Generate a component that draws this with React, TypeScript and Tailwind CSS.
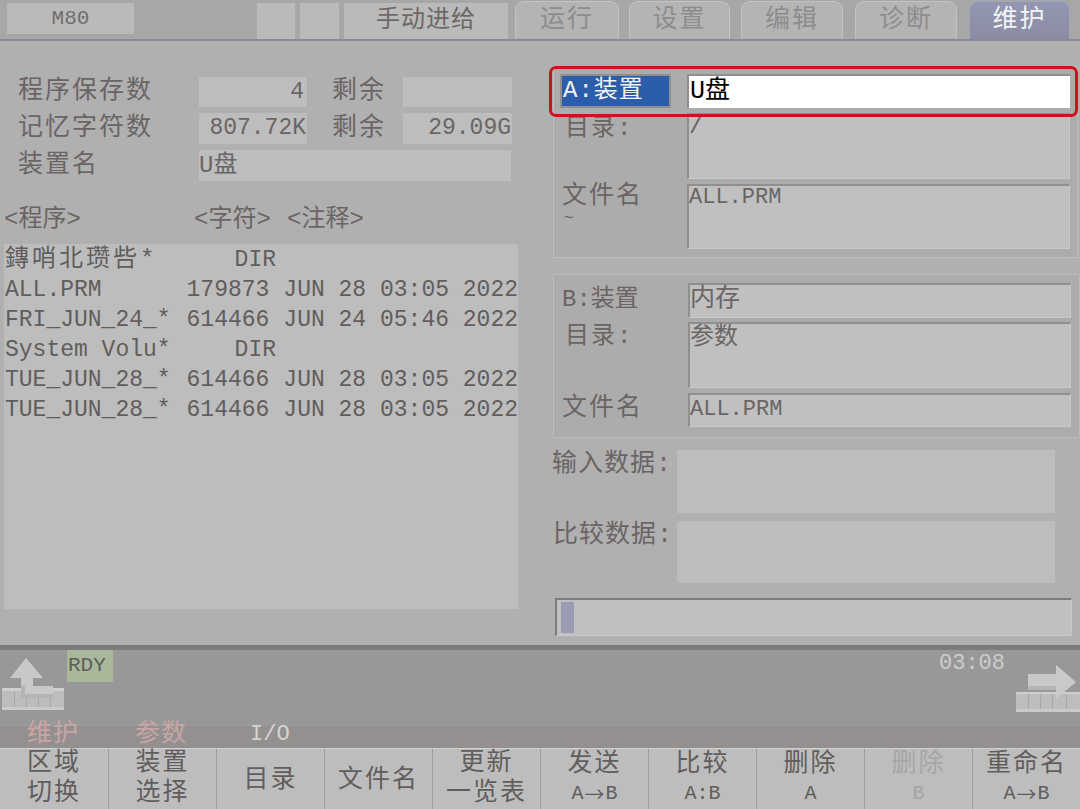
import React from "react";

const fieldCls = "bg-[#bcbdbc] text-[#6a6565]";
const inset = "border-t-2 border-l-2 border-[#8f8f8f] border-b border-r border-b-[#c9c9c9] border-r-[#c9c9c9] bg-[#bfc0bf] text-[#6a6565]";

const files = [
  { name: "鏄哨北瓒呰*", size: "DIR", date: "" },
  { name: "ALL.PRM", size: "179873", date: "JUN 28 03:05 2022" },
  { name: "FRI_JUN_24_*", size: "614466", date: "JUN 24 05:46 2022" },
  { name: "System Volu*", size: "DIR", date: "" },
  { name: "TUE_JUN_28_*", size: "614466", date: "JUN 28 03:05 2022" },
  { name: "TUE_JUN_28_*", size: "614466", date: "JUN 28 03:05 2022" },
];

const tabs = [
  { label: "运行", w: "w-[104px]", ml: "ml-[7px]" },
  { label: "设置", w: "w-[101px]", ml: "ml-[10px]" },
  { label: "编辑", w: "w-[102px]", ml: "ml-[11px]" },
  { label: "诊断", w: "w-[102px]", ml: "ml-[12px]" },
];

const keys = [
  { a: "区域", b: "切换" },
  { a: "装置", b: "选择" },
  { a: "目录" },
  { a: "文件名" },
  { a: "更新", b: "一览表" },
  { a: "发送", b: ["A", "→", "B"], mono: true },
  { a: "比较", b: "A:B", mono: true },
  { a: "删除", b: "A", mono: true },
  { a: "删除", b: "B", mono: true, off: true },
  { a: "重命名", b: ["A", "→", "B"], mono: true },
];

const UpIcon = () => (
  <svg width="64" height="58" viewBox="0 0 64 58">
    <rect x="1" y="32" width="62" height="22" fill="#bdbdbd" />
    <rect x="1" y="32" width="62" height="3" fill="#cfcfcf" />
    <rect x="1" y="51" width="62" height="3" fill="#cacaca" />
    {[13, 25, 37, 49].map((x) => (
      <rect key={x} x={x} y="35" width="1" height="16" fill="#a9a9a9" />
    ))}
    <path d="M25 2 L42 22 L32 22 L32 30 L52 30 L52 42 L20 42 L20 22 L9 22 Z" fill="#c8c8c8" />
    <path d="M20 30 L20 42 L52 42 L52 38 L24 38 L24 30 Z" fill="#b4b4b4" />
  </svg>
);

const RightIcon = () => (
  <svg width="64" height="50" viewBox="0 0 64 50">
    <rect x="0" y="28" width="64" height="20" fill="#bdbdbd" />
    <rect x="0" y="28" width="64" height="2" fill="#cfcfcf" />
    <rect x="0" y="45" width="64" height="3" fill="#cacaca" />
    {[12, 24, 36, 50].map((x) => (
      <rect key={x} x={x} y="30" width="1" height="15" fill="#a9a9a9" />
    ))}
    <path d="M12 10 L40 10 L40 1 L60 18 L40 35 L40 26 L12 26 Z" fill="#c9c9c9" />
    <path d="M12 22 L40 22 L40 26 L12 26 Z" fill="#b5b5b5" />
  </svg>
);

export default function App() {
  return (
    <div className="w-[1080px] h-[809px] overflow-hidden bg-[#b0b0b0] font-['Liberation_Mono','Noto_Sans_CJK_SC',monospace] text-[#6a6464] flex flex-col select-none">
      {/* top bar */}
      <div className="h-[39px] bg-[#a7a7a7] flex items-start shrink-0">
        <div className="ml-[7px] mt-[3px] w-[127px] h-[31px] bg-[#b9bab9] flex items-center justify-center text-[21px] text-[#6f6f6f]">M80</div>
        <div className="ml-[123px] mt-[3px] w-[38px] h-[36px] bg-[#b9bab9]" />
        <div className="ml-[5px] mt-[3px] w-[39px] h-[36px] bg-[#b9bab9]" />
        <div className="ml-[5px] mt-[3px] w-[164px] h-[36px] bg-[#b9bab9] flex items-center justify-center text-[24px] tracking-[1px] text-[#6d6868]">手动进给</div>
        {tabs.map((t) => (
          <div
            key={t.label}
            className={`${t.ml} ${t.w} mt-[1px] h-[38px] rounded-t-[9px] bg-[#b3b4b3] border-t border-x border-[#c3c3c3] flex items-center justify-center text-[25px] tracking-[2px] text-[#8d8d8d]`}
          >
            {t.label}
          </div>
        ))}
        <div className="ml-[12px] w-[101px] mt-[1px] h-[38px] rounded-t-[9px] bg-gradient-to-b from-[#9497b2] to-[#8a8ca3] border-t border-x border-[#a3a5bb] flex items-center justify-center text-[25px] tracking-[2px] text-[#f4f4f4]">
          维护
        </div>
      </div>
      <div className="h-[2px] bg-[#8b8798] shrink-0" />

      {/* main */}
      <div className="h-[604px] flex shrink-0">
        {/* left */}
        <div className="w-[540px] flex flex-col">
          <div className="pl-[18px] pt-[36px] flex flex-col gap-[6px] text-[25px]">
            <div className="flex h-[30px] items-center">
              <span className="w-[181px] tracking-[2px]">程序保存数</span>
              <span className={`${fieldCls} w-[108px] h-full text-right pr-[3px] text-[23px] leading-[30px]`}>4</span>
              <span className="w-[96px] pl-[25px] tracking-[2px] whitespace-nowrap">剩余</span>
              <span className={`${fieldCls} w-[109px] h-full`} />
            </div>
            <div className="flex h-[31px] items-center">
              <span className="w-[181px] tracking-[2px]">记忆字符数</span>
              <span className={`${fieldCls} w-[108px] h-full text-right pr-[1px] text-[23px] leading-[31px]`}>807.72K</span>
              <span className="w-[96px] pl-[25px] tracking-[2px] whitespace-nowrap">剩余</span>
              <span className={`${fieldCls} w-[109px] h-full text-right pr-[1px] text-[23px] leading-[31px]`}>29.09G</span>
            </div>
            <div className="flex h-[31px] items-center">
              <span className="w-[181px] tracking-[2px]">装置名</span>
              <span className={`${fieldCls} w-[312px] h-full text-[24px] leading-[31px]`}>U盘</span>
            </div>
          </div>
          <div className="mt-[25px] h-[28px] flex items-center pl-[4px] text-[24px] text-[#6a6464]">
            <span className="w-[190px]">&lt;程序&gt;</span>
            <span className="w-[93px]">&lt;字符&gt;</span>
            <span>&lt;注释&gt;</span>
          </div>
          <div className="mt-[10px] ml-[4px] w-[514px] h-[365px] bg-[#bcbdbc] pt-[1px] text-[#625d5d]">
            {files.map((f, i) => (
              <div key={i} className="h-[30px] flex items-center text-[23px] whitespace-pre">
                <span className={`w-[187px] pl-[1px] ${i === 0 ? "text-[24px] tracking-[3px]" : ""}`}>{f.name}</span>
                <span className="w-[85px] text-right">{f.size}</span>
                <span className="pl-[14px]">{f.date}</span>
              </div>
            ))}
          </div>
        </div>

        {/* right */}
        <div className="flex-1 flex flex-col">
          <div className="relative ml-[13px] mt-[25px] w-[525px] h-[192px] bg-[#acacac] border border-[#bdbdbd] pt-[7px] pl-[6px] flex flex-col gap-[5px]">
            <div className="flex h-[34px] gap-[16px]">
              <div className="w-[111px] h-full bg-[#2c5daa] border-2 border-[#8f8f8f] text-[#f2f2f2] text-[24px] leading-[30px] pl-[1px] tracking-[1px]">A:装置</div>
              <div className="w-[383px] h-full bg-white border-t-2 border-l-2 border-[#8f8f8f] text-black text-[25px] leading-[32px] pl-[1px]">U盘</div>
            </div>
            <div className="flex h-[66px] gap-[16px]">
              <div className="w-[111px] pl-[5px] text-[24px] leading-[32px] tracking-[2px]">目录:</div>
              <div className={`${inset} w-[383px] h-full text-[24px] leading-[24px]`}>/</div>
            </div>
            <div className="flex h-[65px] gap-[16px]">
              <div className="w-[111px] pl-[2px] flex flex-col">
                <span className="text-[25px] leading-[26px] tracking-[2px]">文件名</span>
                <span className="text-[16px] leading-[10px] pl-[2px] mt-[4px]">~</span>
              </div>
              <div className={`${inset} w-[383px] h-full text-[22px] leading-[24px]`}>ALL.PRM</div>
            </div>
            <div className="absolute left-[-5px] top-[-1px] w-[529px] h-[51px] border-[3px] border-[#d0101c] rounded-[7px]" />
          </div>

          <div className="ml-[13px] mt-[16px] w-[527px] h-[164px] bg-[#acacac] border border-[#bdbdbd] pt-[8px] pl-[6px] flex flex-col">
            <div className="flex h-[35px] gap-[17px]">
              <div className="w-[111px] pl-[2px] text-[24px] leading-[34px]">B:装置</div>
              <div className={`${inset} w-[383px] h-full text-[25px] leading-[30px]`}>内存</div>
            </div>
            <div className="flex h-[66px] gap-[17px] mt-[4px]">
              <div className="w-[111px] pl-[5px] text-[24px] leading-[30px] tracking-[2px]">目录:</div>
              <div className={`${inset} w-[383px] h-full text-[24px] leading-[28px]`}>参数</div>
            </div>
            <div className="flex h-[34px] gap-[17px] mt-[5px]">
              <div className="w-[111px] pl-[2px] text-[25px] leading-[32px] tracking-[2px]">文件名</div>
              <div className={`${inset} w-[383px] h-full text-[22px] leading-[30px]`}>ALL.PRM</div>
            </div>
          </div>

          <div className="flex mt-[12px] ml-[12px]">
            <div className="w-[125px] text-[25px] leading-[30px] tracking-[1px]">输入数据:</div>
            <div className={`${fieldCls} w-[378px] h-[63px]`} />
          </div>
          <div className="flex mt-[8px] ml-[13px]">
            <div className="w-[124px] text-[25px] leading-[30px] tracking-[1px]">比较数据:</div>
            <div className={`${fieldCls} w-[378px] h-[62px]`} />
          </div>
          <div className="ml-[15px] mt-[15px] w-[517px] h-[38px] bg-[#bfc0bf] border-t-2 border-l-2 border-[#807b7b] border-b border-r border-b-[#cacaca] border-r-[#cacaca] flex items-stretch py-[2px] pl-[4px]">
            <div className="w-[13px] bg-[#9a9cb3]" />
          </div>
        </div>
      </div>

      {/* status bar */}
      <div className="h-[5px] bg-[#7f7b7b] shrink-0" />
      <div className="h-[75px] bg-[#989898] flex items-start relative shrink-0">
        <div className="mt-[6px] ml-[1px]">
          <UpIcon />
        </div>
        <div className="ml-[2px] w-[46px] h-[32px] bg-[#a9b89a] text-[21px] leading-[32px] text-[#5e5e5e] pl-[1px]">RDY</div>
        <div className="ml-auto mt-[1px] text-[22px] leading-[26px] text-[#cdcdcd] mr-[11px]">03:08</div>
        <div className="mt-[14px]">
          <RightIcon />
        </div>
      </div>
      <div className="h-[23px] bg-[#949090] border-t border-[#9c9898] flex items-end shrink-0 relative">
        <div className="absolute left-0 top-[-5px] flex text-[25px] leading-[28px]">
          <span className="ml-[27px] w-[108px] text-[#c9a6a6] tracking-[1px]">维护</span>
          <span className="w-[115px] text-[#c9a6a6] tracking-[1px]">参数</span>
          <span className="text-[#d4d4d4] text-[22px]">I/O</span>
        </div>
      </div>

      {/* soft keys */}
      <div className="h-[61px] flex bg-[#bcbdbc] border-t border-[#cfcfcf] shrink-0">
        {keys.map((k, i) => (
          <div
            key={i}
            className={`w-[108px] h-full flex flex-col items-center justify-center ${i > 0 ? "border-l border-[#9d9d9d]" : ""} ${k.off ? "text-[#a6a6a6]" : "text-[#625d5d]"}`}
          >
            {k.b ? (
              <>
                <span className="text-[25px] leading-[30px] tracking-[2px]">{k.a}</span>
                {Array.isArray(k.b) ? (
                  <span className="text-[20px] leading-[28px] flex items-center">
                    {k.b[0]}
                    <span className="font-['Noto_Sans_CJK_SC',sans-serif] text-[20px] mx-[1px]">{k.b[1]}</span>
                    {k.b[2]}
                  </span>
                ) : (
                  <span className={k.mono ? "text-[20px] leading-[28px]" : "text-[25px] leading-[30px] tracking-[2px]"}>{k.b}</span>
                )}
              </>
            ) : (
              <span className="text-[25px] leading-[30px] tracking-[2px] mt-[4px]">{k.a}</span>
            )}
          </div>
        ))}
      </div>
    </div>
  );
}
